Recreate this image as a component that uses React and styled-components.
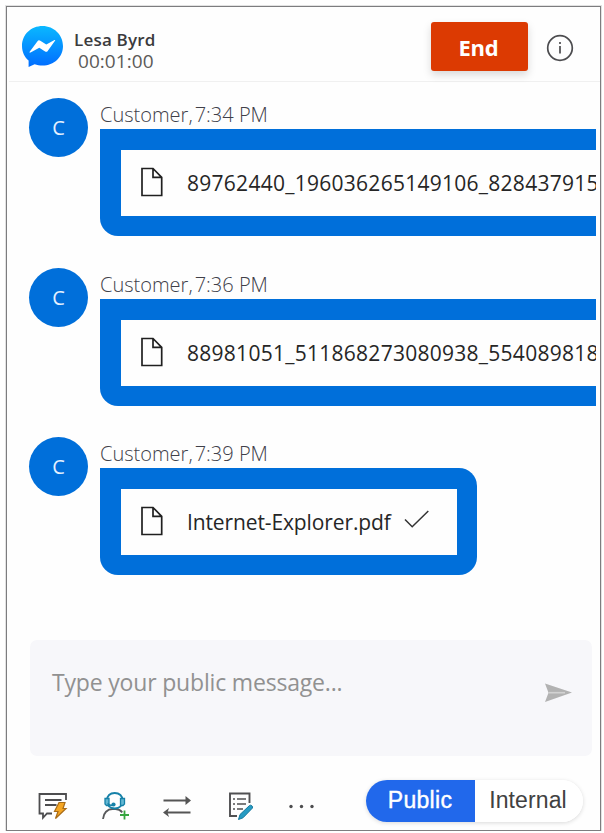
import React from "react";
import styled, { createGlobalStyle } from "styled-components";

const GlobalStyle = createGlobalStyle`
  * { box-sizing: border-box; }
  html, body { margin: 0; padding: 0; background: #fff; overflow: hidden; }
  body { font-family: "Open Sans", "Noto Sans", sans-serif; }
  button { margin: 0; padding: 0; border: 0; background: none; font: inherit; }
  svg { display: block; flex: none; }
`;

const Panel = styled.main`
  width: 595px;
  height: 825px;
  margin: 6px 0 0 6px;
  border: 1px solid #7d7d7f;
  box-shadow: 0 0 0 1px #e2e2e2;
  display: flex;
  flex-direction: column;
  background: #fefefe;
`;

const Header = styled.header`
  height: 75px;
  margin-left: 2px;
  padding: 0 26px 0 12px;
  border-bottom: 1px solid #f0f0f0;
  display: flex;
  align-items: flex-start;
  flex: none;
`;

const LogoBox = styled.div`
  padding-top: 18px;
`;

const Identity = styled.div`
  display: flex;
  flex-direction: column;
  padding: 21px 0 0 10px;
  flex: 1;
`;

const Name = styled.div`
  font: 600 17px/23px "Open Sans", sans-serif;
  letter-spacing: 0.2px;
  color: #3b3b3d;
  white-space: nowrap;
`;

const Timer = styled.div`
  font: 400 19px/20px "Open Sans", sans-serif;
  letter-spacing: 0.05px;
  color: #5c5a58;
  margin-left: 4px;
`;

const EndButton = styled.button`
  width: 97px;
  height: 49px;
  margin: 15px 18px 0 0;
  border-radius: 3px;
  background: #dc3a02;
  box-shadow: 0 4px 8px rgba(0, 0, 0, 0.15);
  color: #fff;
  font-weight: 700;
  font-size: 22px;
  letter-spacing: -0.3px;
  line-height: 50px;
  text-indent: -2px;
`;

const InfoButton = styled.button`
  padding-top: 27px;
`;

const Messages = styled.section`
  height: 556.5px;
  padding: 15px 0 0 22px;
  margin-right: 4px;
  overflow: hidden;
  flex: none;
`;

const MessageRow = styled.article`
  height: 169.6px;
  display: flex;
  align-items: flex-start;
  gap: 12px;
`;

const Avatar = styled.div`
  width: 59px;
  height: 59px;
  margin-top: 1px;
  border-radius: 50%;
  background: #006fda;
  color: #e6f1ff;
  font-size: 20px;
  line-height: 60px;
  text-align: center;
  flex: none;
`;

const MessageBody = styled.div`
  flex: none;
`;

const Meta = styled.div`
  height: 32px;
  font-size: 20px;
  line-height: 35px;
  font-weight: 340;
  letter-spacing: 0;
  color: #404049;
  white-space: nowrap;
`;

const Bubble = styled.div`
  width: ${(p) => p.$width};
  height: 107px;
  padding: 21px 20px 20px 21px;
  border-radius: 0 18px 18px 18px;
  background: #006fda;
`;

const FileCard = styled.div`
  height: 66px;
  padding: 0 20px;
  display: flex;
  align-items: center;
  background: #fefefe;
`;

const FileName = styled.span`
  margin: 0 13px 0 24px;
  font-size: 21px;
  letter-spacing: ${(p) => p.$track};
  color: #262626;
  white-space: nowrap;
`;

const Composer = styled.section`
  height: 116px;
  margin: 1px 8px 0 22.5px;
  padding: 0 19px 0 22.5px;
  border-radius: 7px;
  background: #f7f7fa;
  display: flex;
  justify-content: space-between;
  flex: none;
`;

const Placeholder = styled.div`
  padding-top: 26px;
  font-size: 23px;
  line-height: 32px;
  letter-spacing: -0.18px;
  color: #919191;
`;

const SendButton = styled.button`
  height: 22px;
  margin-top: 42.5px;
`;

const Footer = styled.footer`
  display: flex;
  align-items: flex-start;
  padding: 24px 17px 0 31px;
`;

const Tools = styled.div`
  display: grid;
  grid-template-columns: 64px 60px 67px 60px 30px;
  padding-top: 12px;
  flex: 1;
`;

const Toggle = styled.div`
  width: 217px;
  height: 42px;
  border-radius: 21px;
  overflow: hidden;
  display: flex;
  background: #fff;
  box-shadow: 0 1px 4px rgba(0, 0, 0, 0.15);
`;

const ToggleOption = styled.button`
  width: ${(p) => (p.$active ? "109px" : "108px")};
  padding-right: ${(p) => (p.$active ? "1px" : "2px")};
  font: 400 23px/41px "Liberation Sans", Arial, sans-serif;
  letter-spacing: ${(p) => (p.$active ? "0.3px" : "0.1px")};
  color: ${(p) => (p.$active ? "#fff" : "#414141")};
  -webkit-text-stroke: ${(p) => (p.$active ? "0.4px #fff" : "0")};
  background: ${(p) => (p.$active ? "#2168eb" : "#fff")};
`;

const MessengerLogo = () => (
  <svg width="43" height="43" viewBox="0 0 43 43">
    <defs>
      <linearGradient id="messenger" x1="0" y1="0" x2="0" y2="1">
        <stop offset="0" stopColor="#0ab8ff" />
        <stop offset="1" stopColor="#006cff" />
      </linearGradient>
    </defs>
    <path fill="url(#messenger)" d="M21.500 1C10 1 1 9.500 1 21c0 6 2.500 11 6.600 14.600V42l6-2.800c2.500.9 5.100 1.400 7.900 1.400C33 40.600 42 32 42 21S33 1 21.500 1Z" />
    <path fill="#fff" d="M8.500 27 16.500 16.200q1-1.400 2.800-.5l6 3.800L33.500 15q1.200-.4.500.7L26.700 26q-1 1.400-2.600.5L18.300 22.800 10 27.300q-1.500.8-1.500-.3Z" />
  </svg>
);

const InfoIcon = () => (
  <svg width="28" height="28" viewBox="0 0 28 28" fill="none" stroke="#4c4c4f">
    <circle cx="14" cy="14" r="12.300" strokeWidth="1.700" />
    <path d="M14 12v7.500M14 8v2" strokeWidth="1.700" />
  </svg>
);

const FileIcon = () => (
  <svg width="22" height="32" viewBox="0 0 22 32" fill="none" stroke="#202020" strokeWidth="1.700">
    <path d="M1 1.500H12L20.700 10.300V28.500H1ZM12 1.500V10.300H20.700" />
  </svg>
);

const CheckIcon = () => (
  <svg width="26" height="24" viewBox="0 0 26 24" fill="none" stroke="#333" strokeWidth="1.500">
    <path d="M1 9.500 8.200 16.700 24.300 1" />
  </svg>
);

const SendIcon = () => (
  <svg width="29" height="20" viewBox="0 0 29 20">
    <path fill="#b2b2b2" d="M1 .5 28 9.500 1 19 4.500 9.700Z" />
    <path stroke="#d2d2d2" strokeWidth="1.600" d="M4.500 9.700H21" />
  </svg>
);

const QuickReplyIcon = () => (
  <svg width="32" height="30" viewBox="0 0 32 30" fill="none" stroke="#4d4d4f" strokeWidth="1.800">
    <path d="M28 8V2H1.500v19.500H5v4.300l4-4.300H14M7 8h16.500M7 13h11.500" />
    <path fill="#f5a623" stroke="#a96c17" strokeWidth="1.200" d="M21 10.500h6l-2 6h3L17.500 26.500l2.500-7h-3.500Z" />
  </svg>
);

const AgentIcon = () => (
  <svg width="30" height="30" viewBox="0 0 30 30" fill="none">
    <path stroke="#58595b" strokeWidth="1.800" d="M1 27c.3-6 4.500-10 9.500-10h3c3 0 5 1.200 6.800 3.300" />
    <path stroke="#1681a8" strokeWidth="2" d="M5 8.500C5 4 8 1 12.700 1s7.800 3 7.800 7.500c0 5-3 8-7.700 8S5 13.500 5 8.500Z" />
    <path fill="#63b7d3" stroke="#1681a8" strokeWidth="1.300" d="M3 6.500h4v7H4.500L3 12ZM18.500 6.500h4V12L21 13.500h-2.500Z" />
    <path stroke="#1681a8" strokeWidth="1.600" d="M5.500 11.500c1.500 1.600 3 2 5 2" />
    <circle cx="11.500" cy="12.500" r="2.100" fill="#1681a8" />
    <path stroke="#36a53f" strokeWidth="1.800" d="M22.500 18.500v9M18 23H27" />
  </svg>
);

const TransferIcon = () => (
  <svg width="30" height="30" viewBox="0 0 30 30" fill="none" stroke="#555" strokeWidth="1.800">
    <path d="M1.500 8.500H25M4 20.500H28.500" />
    <path fill="#555" stroke="none" d="M23.500 4 29 8.500 23.500 13ZM7 16 1 20.500 7 25 5.500 20.500Z" />
  </svg>
);

const NoteIcon = () => (
  <svg width="30" height="30" viewBox="0 0 30 30" fill="none" stroke="#505052" strokeWidth="1.900">
    <path d="M20.500 11V1.500H1V24h7" />
    <path strokeWidth="1.500" d="M4 7h2M8 7h9M4 12h2M8 12h9M4 17h2M8 17h6" />
    <path fill="#269bc3" stroke="#17799e" strokeWidth="1" d="M11 22.500 20.500 13.500q1.200-.8 2.400.3t.4 2.400L14 25.800 9.500 27.500Z" />
  </svg>
);

const MoreIcon = () => (
  <svg width="30" height="30" viewBox="0 0 30 30" fill="#4d4d4f">
    <circle cx="2" cy="14.500" r="1.700" />
    <circle cx="12.500" cy="14.500" r="1.700" />
    <circle cx="23" cy="14.500" r="1.700" />
  </svg>
);

const messages = [
  { time: "7:34 PM", file: "89762440_196036265149106_828437915", width: "540px", track: "0.27px" },
  { time: "7:36 PM", file: "88981051_511868273080938_554089818", width: "540px", track: "0.27px" },
  { time: "7:39 PM", file: "Internet-Explorer.pdf", width: "377px", track: "-0.12px", done: true },
];

export default function App() {
  return (
    <>
      <GlobalStyle />
      <Panel>
        <Header>
          <LogoBox><MessengerLogo /></LogoBox>
          <Identity>
            <Name>Lesa Byrd</Name>
            <Timer>00:01:00</Timer>
          </Identity>
          <EndButton>End</EndButton>
          <InfoButton aria-label="Information"><InfoIcon /></InfoButton>
        </Header>
        <Messages>
          {messages.map((m) => (
            <MessageRow key={m.time}>
              <Avatar>C</Avatar>
              <MessageBody>
                <Meta>Customer,&#8202;{m.time}</Meta>
                <Bubble $width={m.width}>
                  <FileCard>
                    <FileIcon />
                    <FileName $track={m.track}>{m.file}</FileName>
                    {m.done && <CheckIcon />}
                  </FileCard>
                </Bubble>
              </MessageBody>
            </MessageRow>
          ))}
        </Messages>
        <Composer>
          <Placeholder>Type your public message...</Placeholder>
          <SendButton aria-label="Send"><SendIcon /></SendButton>
        </Composer>
        <Footer>
          <Tools>
            <QuickReplyIcon />
            <AgentIcon />
            <TransferIcon />
            <NoteIcon />
            <MoreIcon />
          </Tools>
          <Toggle>
            <ToggleOption $active>Public</ToggleOption>
            <ToggleOption>Internal</ToggleOption>
          </Toggle>
        </Footer>
      </Panel>
    </>
  );
}
